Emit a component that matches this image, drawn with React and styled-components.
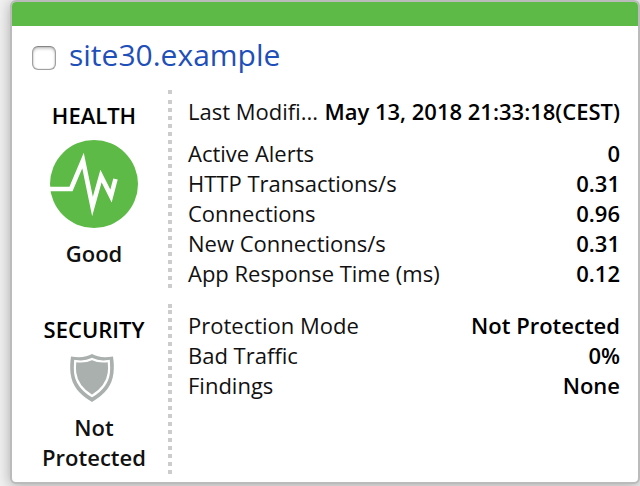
import React from "react";
import styled, { createGlobalStyle } from "styled-components";

const GlobalStyle = createGlobalStyle`
  *, *::before, *::after { box-sizing: border-box; }
  body {
    margin: 0;
    background: #f1f1f1;
    color: #111;
    font-family: "Open Sans", "Noto Sans", sans-serif;
    font-size: 22px;
    line-height: 30px;
  }
`;

const Page = styled.main`
  padding: 0 0 2px 10px;
  overflow: hidden;
`;

const Card = styled.article`
  background: #fff;
  border: 2px solid #bbb;
  border-radius: 6px;
  box-shadow: 0 2px 14px rgba(0, 0, 0, 0.3);
  overflow: hidden;
  padding-bottom: 8px;
`;

const StatusBar = styled.div`
  height: 24px;
  background: #5dba46;
`;

const Header = styled.header`
  display: flex;
  align-items: center;
  gap: 13px;
  height: 64px;
  padding: 0 20px 6px;
`;

const Checkbox = styled.input`
  appearance: none;
  flex: none;
  width: 24px;
  height: 24px;
  margin: 6px 0 0;
  border: 1px solid #a0a0a0;
  border-top-color: #858585;
  border-radius: 6px;
  background: #fff;
  box-shadow: inset 0 2px 3px rgba(0, 0, 0, 0.2), inset 0 0 1px rgba(0, 0, 0, 0.5);

  &:checked { background: #1f4fb8; }
`;

const SiteLink = styled.a`
  color: #1f4fb8;
  font-size: 30px;
  line-height: 42px;
  text-decoration: none;
`;

const Section = styled.section`
  display: grid;
  grid-template-columns: 160px minmax(0, 1fr);

  & + & { margin-top: 16px; }
`;

const Summary = styled.div`
  display: flex;
  flex-direction: column;
  align-items: center;
  padding: ${(p) => (p.$tall ? "10px 4px 20px 8px" : "10px 4px 2px 8px")};
  text-align: center;
  font-weight: 600;
  background:
    linear-gradient(#ccc, #ccc) right top / 4px 4px no-repeat,
    linear-gradient(#fff, #fff) right top / 4px ${(p) => (p.$tall ? "10px" : "6px")} no-repeat,
    repeating-linear-gradient(
      ${(p) =>
        p.$tall
          ? "#fff 0 2px, #ccc 2px 6px, #fff 6px 8px"
          : "#ccc 0 2px, #fff 2px 6px, #ccc 6px 8px"}
    ) right top / 4px 100% no-repeat;
`;

const Heading = styled.h2`
  margin: 0;
  color: #000;
  font-size: 22px;
  font-weight: 600;
  line-height: 30px;
`;

const HealthIcon = styled.svg`
  display: block;
  width: 88px;
  height: 88px;
  margin: 10px 0;
`;

const ShieldIcon = styled.svg`
  display: block;
  width: 44px;
  height: 48px;
  margin: 10px 4px 10px 0;
`;

const Metrics = styled.dl`
  margin: 0;
  padding: 6px 18px 0 16px;
`;

const Metric = styled.div`
  display: flex;
  justify-content: space-between;
  gap: 4px;
  margin-bottom: ${(p) => (p.$spaced ? "12px" : "0")};
`;

const Label = styled.dt`
  white-space: nowrap;
`;

const Value = styled.dd`
  margin: 0;
  color: #000;
  font-weight: 600;
  white-space: nowrap;
`;

const health = [
  { label: "Last Modifi...", value: "May 13, 2018 21:33:18(CEST)", spaced: true },
  { label: "Active Alerts", value: "0" },
  { label: "HTTP Transactions/s", value: "0.31" },
  { label: "Connections", value: "0.96" },
  { label: "New Connections/s", value: "0.31" },
  { label: "App Response Time (ms)", value: "0.12" },
];

const security = [
  { label: "Protection Mode", value: "Not Protected" },
  { label: "Bad Traffic", value: "0%" },
  { label: "Findings", value: "None" },
];

function MetricList({ items }) {
  return (
    <Metrics>
      {items.map(({ label, value, spaced }) => (
        <Metric key={label} $spaced={spaced}>
          <Label>{label}</Label>
          <Value>{value}</Value>
        </Metric>
      ))}
    </Metrics>
  );
}

export default function App() {
  return (
    <>
      <GlobalStyle />
      <Page>
        <Card>
          <StatusBar />
          <Header>
            <Checkbox type="checkbox" id="site" aria-labelledby="site-name" />
            <SiteLink id="site-name" href="#site30">site30.example</SiteLink>
          </Header>
          <Section>
            <Summary $tall>
              <Heading>HEALTH</Heading>
              <HealthIcon viewBox="0 0 88 88" aria-hidden="true">
                <circle cx="44" cy="44" r="44" fill="#5dba46" />
                <path
                  d="M0 49H21L33 20.5L42.5 66.5L51 36L61 56L65.5 39"
                  fill="none"
                  stroke="#fff"
                  strokeWidth="4.6"
                  strokeMiterlimit="10"
                />
              </HealthIcon>
              <span>Good</span>
            </Summary>
            <MetricList items={health} />
          </Section>
          <Section>
            <Summary>
              <Heading>SECURITY</Heading>
              <ShieldIcon viewBox="0 0 44 48" aria-hidden="true">
                <path
                  d="M22 0C17 3 10 4 1 2.5C0 9 0 14 0.5 19C2 32 9 40 22 48C35 40 42 32 43.5 19C44 14 44 9 43 2.5C34 4 27 3 22 0Z"
                  fill="#aab0ae"
                />
                <path
                  d="M22 5C17 7.5 11 8 5.2 7C4.8 12 4.8 16 5.2 19C6.5 29 12 36 22 42C32 36 37.5 29 38.8 19C39.2 16 39.2 12 38.8 7C33 8 27 7.5 22 5Z"
                  fill="none"
                  stroke="#fff"
                  strokeWidth="2.2"
                />
              </ShieldIcon>
              <span>Not<br />Protected</span>
            </Summary>
            <MetricList items={security} />
          </Section>
        </Card>
      </Page>
    </>
  );
}
